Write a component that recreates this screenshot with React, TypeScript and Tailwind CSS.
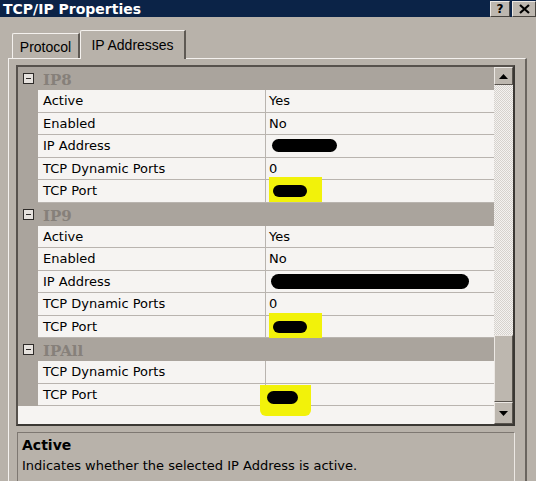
import React from "react";

type Row = { name: string; value?: string; blob?: "ip" | "ipLong" | "port" | "portAll" };

const groups: { title: string; rows: Row[] }[] = [
  {
    title: "IP8",
    rows: [
      { name: "Active", value: "Yes" },
      { name: "Enabled", value: "No" },
      { name: "IP Address", blob: "ip" },
      { name: "TCP Dynamic Ports", value: "0" },
      { name: "TCP Port", blob: "port" },
    ],
  },
  {
    title: "IP9",
    rows: [
      { name: "Active", value: "Yes" },
      { name: "Enabled", value: "No" },
      { name: "IP Address", blob: "ipLong" },
      { name: "TCP Dynamic Ports", value: "0" },
      { name: "TCP Port", blob: "port" },
    ],
  },
  {
    title: "IPAll",
    rows: [
      { name: "TCP Dynamic Ports", value: "" },
      { name: "TCP Port", blob: "portAll" },
    ],
  },
];

function Blob({ kind }: { kind: Row["blob"] }) {
  if (kind === "ip")
    return <span className="block ml-[3px] w-[65px] h-[13px] rounded-full bg-black" />;
  if (kind === "ipLong")
    return <span className="block ml-[2px] w-[198px] h-[15px] rounded-full bg-black" />;
  if (kind === "port")
    return (
      <span className="relative block w-[53px] h-full">
        <span className="absolute left-0 top-[-3px] w-[53px] h-[25px] bg-[#f2f20a]" />
        <span className="absolute left-[4px] top-[5px] w-[34px] h-[12px] rounded-full bg-black" />
      </span>
    );
  if (kind === "portAll")
    return (
      <span className="relative block w-[52px] h-full">
        <span className="absolute left-[-9px] top-[1px] w-[51px] h-[31px] rounded-b-md bg-[#f2f20a]" />
        <span className="absolute left-[-2px] top-[7px] w-[31px] h-[13px] rounded-full bg-black" />
      </span>
    );
  return null;
}

function MinusBox() {
  return (
    <span className="flex items-center justify-center w-[11px] h-[11px] border border-[#2e2b29] bg-[#e6e2de]">
      <span className="block w-[5px] h-[1px] bg-[#2e2b29]" />
    </span>
  );
}

export default function App() {
  return (
    <div
      className="w-[536px] h-[481px] overflow-hidden bg-[#b8b2aa] flex flex-col"
      style={{ fontFamily: '"DejaVu Sans", Verdana, sans-serif' }}
    >
      {/* Title bar */}
      <div className="h-[19px] bg-[#0b2347] flex items-center justify-between pl-[3px]">
        <span className="text-white font-bold text-[14px] leading-none">TCP/IP Properties</span>
        <div className="flex gap-[2px] h-full items-start pt-[1px]">
          <span className="w-[20px] h-[16px] bg-[#bdb7af] border-t border-l border-[#ece8e4] border-r border-b border-r-[#48443f] border-b-[#48443f] flex items-center justify-center text-[12px] font-bold text-black leading-none">
            ?
          </span>
          <span className="w-[24px] h-[16px] bg-[#bdb7af] border-t border-l border-[#ece8e4] border-r border-b border-r-[#48443f] border-b-[#48443f] flex items-center justify-center">
            <svg width="11" height="10" viewBox="0 0 11 10">
              <path d="M1 1 L10 9 M10 1 L1 9" stroke="#000" strokeWidth="2.2" />
            </svg>
          </span>
        </div>
      </div>
      <div className="h-[1px] bg-[#d8d3ce]" />

      {/* Tabs */}
      <div className="flex items-end pl-[12px] mt-[13px] h-[29px]" style={{ fontFamily: '"Liberation Sans", Arial, sans-serif' }}>
        <div className="w-[68px] h-[25px] bg-[#b8b2aa] border-t border-l border-[#f4f1ee] border-r-2 border-r-[#5e5953] rounded-tl-[2px] flex items-center justify-center text-[14px] text-black leading-none pt-[2px]">
          Protocol
        </div>
        <div className="relative z-10 mb-[-1px] w-[106px] h-[29px] bg-[#b8b2aa] border-t border-l border-[#f4f1ee] border-r-2 border-r-[#5e5953] rounded-tl-[2px] flex items-start justify-center text-[14px] text-black leading-none pt-[7px]">
          IP Addresses
        </div>
      </div>

      {/* Tab panel */}
      <div className="ml-[8px] w-[519px] flex-1 border-t border-l border-[#f4f1ee] border-r-2 border-r-[#6a655f] pl-[7px] pt-[6px]">
        {/* Property grid */}
        <div className="w-[499px] h-[361px] border-2 border-[#3b3834] border-t-[#57524d] border-l-[#57524d] bg-[#f6f4f2] flex">
          <div className="w-[476px] flex flex-col">
            {groups.map((g) => (
              <div key={g.title} className="flex flex-col">
                <div className="h-[23px] bg-[#aaa49d] flex items-center">
                  <div className="w-[20px] flex justify-center pl-[1px]">
                    <MinusBox />
                  </div>
                  <span
                    className="ml-[5px] pt-[4px] text-[15px] font-bold text-[#86807a] leading-none"
                    style={{ fontFamily: '"DejaVu Serif", "Liberation Serif", serif' }}
                  >
                    {g.title}
                  </span>
                </div>
                {g.rows.map((r, i) => (
                  <div key={i} className="h-[22.5px] flex">
                    <div className="w-[20px] bg-[#aaa49d]" />
                    <div className="w-[228px] bg-[#f6f4f2] border-b border-[#b9b4af] border-r flex items-center pl-[5px] text-[13px] text-black leading-none">
                      {r.name}
                    </div>
                    <div className="w-[228px] bg-[#f6f4f2] border-b border-[#b9b4af] flex items-center pl-[3px] text-[13px] text-black leading-none">
                      {r.blob ? <Blob kind={r.blob} /> : r.value}
                    </div>
                  </div>
                ))}
              </div>
            ))}
            <div className="flex-1 bg-[#f6f4f2]" />
          </div>

          {/* Scrollbar */}
          <div className="w-[19px] flex flex-col">
            <div className="h-[18px] bg-[#bdb7af] border-t border-l border-[#ece8e4] border-r border-b border-r-[#5a554f] border-b-[#5a554f] flex items-center justify-center">
              <svg width="9" height="5" viewBox="0 0 9 5">
                <path d="M0 5 L4.5 0 L9 5 Z" fill="#000" />
              </svg>
            </div>
            <div className="h-[250px] bg-[repeating-conic-gradient(#d6d2cd_0_25%,#f4f2f0_0_50%)] bg-[length:2px_2px]" />
            <div className="h-[67px] bg-[#bdb7af] border-t border-l border-[#ece8e4] border-r border-b border-r-[#5a554f] border-b-[#5a554f]" />
            <div className="flex-1 bg-[#bdb7af] border-t border-l border-[#ece8e4] border-r border-b border-r-[#5a554f] border-b-[#5a554f] flex items-center justify-center">
              <svg width="9" height="5" viewBox="0 0 9 5">
                <path d="M0 0 L4.5 5 L9 0 Z" fill="#000" />
              </svg>
            </div>
          </div>
        </div>

        {/* Description */}
        <div className="mt-[6px] ml-[1px] w-[498px] h-[60px] border-t border-l border-[#7e7872] border-r border-r-[#ece8e4] pl-[4px] pt-[3px] flex flex-col">
          <span className="font-bold text-[14px] text-black leading-[18px]">Active</span>
          <span className="text-[13px] text-black leading-[18px] mt-[3px]">
            Indicates whether the selected IP Address is active.
          </span>
        </div>
      </div>
    </div>
  );
}
